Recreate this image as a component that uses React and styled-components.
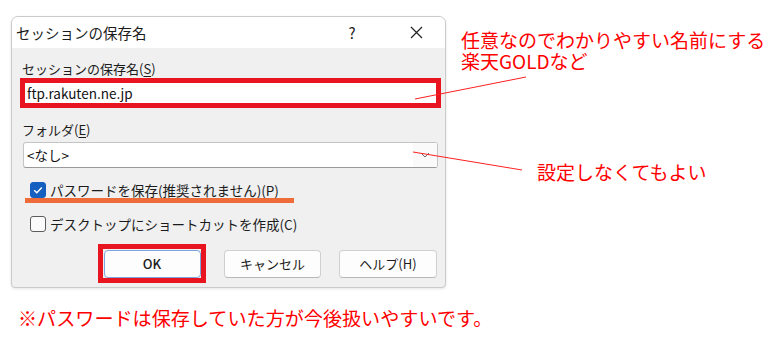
import React from 'react';
import styled, { createGlobalStyle } from 'styled-components';

const GlobalStyle = createGlobalStyle`
  html, body {
    margin: 0;
    padding: 0;
    background: #fff;
  }
  body {
    font-family: "Noto Sans CJK JP", "Noto Sans", sans-serif;
  }
`;

// --- page frame ---
const Page = styled.div`
  position: relative;
  width: 775px;
  height: 337px;
  box-sizing: border-box;
  padding: 16px 0 0 11px;
  overflow: hidden;
  background: #fff;
`;

const TopRow = styled.div`
  display: flex;
  align-items: flex-start;
`;

// --- dialog ---
const Dialog = styled.div`
  width: 435px;
  height: 272px;
  box-sizing: border-box;
  border: 1px solid #cacaca;
  border-radius: 7px 7px 4px 4px;
  background: #f0f0f0;
  overflow: hidden;
  box-shadow: 0 1px 3px rgba(0, 0, 0, 0.1);
  display: flex;
  flex-direction: column;
`;

const TitleBar = styled.div`
  height: 31px;
  flex: none;
  background: #fff;
  display: flex;
  align-items: center;
  padding: 0 6px 0 4px;
`;

const Title = styled.div`
  flex: 1;
  font-size: 14.5px;
  line-height: 20px;
  color: #1b1b1b;
`;

const TitleButton = styled.div`
  width: 46px;
  height: 31px;
  display: flex;
  align-items: center;
  justify-content: center;
  font-size: 15px;
  color: #222;
  & + & {
    margin-left: 18px;
  }
`;

const Body = styled.div`
  flex: 1;
  padding: 12px 7px 5px 11px;
  display: flex;
  flex-direction: column;
`;

const FieldLabel = styled.div`
  font-size: 13px;
  line-height: 18px;
  color: #1b1b1b;
  margin-left: -1px;
  margin-top: ${({ gap }) => gap || 0}px;
`;

const Key = styled.span`
  text-decoration: underline;
  text-underline-offset: 2px;
`;

const RedFrame = styled.div`
  margin: 0 -3px;
  height: 30px;
  box-sizing: border-box;
  border: 5px solid #e8141f;
  background: #fff;
  display: flex;
  align-items: center;
`;

const InputText = styled.div`
  font-size: 13.5px;
  line-height: 20px;
  color: #111;
  padding-left: 2px;
`;

const Select = styled.div`
  margin-top: 3px;
  height: 26px;
  box-sizing: border-box;
  border: 1px solid #c4c4c4;
  border-bottom-color: #9a9a9a;
  border-radius: 3px;
  background: #fff;
  display: flex;
  align-items: center;
`;

const SelectText = styled.div`
  flex: 1;
  font-size: 13.5px;
  line-height: 20px;
  color: #111;
  padding-left: 3px;
`;

const SelectArrow = styled.div`
  width: 24px;
  height: 24px;
  display: flex;
  align-items: center;
  justify-content: center;
  background: #fafafa;
`;

const CheckRow = styled.div`
  position: relative;
  margin-top: ${({ gap }) => gap}px;
  height: 20px;
  display: flex;
  align-items: center;
  padding-left: 7px;

  ${({ marked }) =>
    marked &&
    `
    &::after {
      content: '';
      position: absolute;
      left: 2px;
      top: 18px;
      width: 269px;
      height: 5px;
      background: #ee6c3a;
    }
  `}
`;

const Box = styled.div`
  width: 16px;
  height: 16px;
  box-sizing: border-box;
  border-radius: 3px;
  display: flex;
  align-items: center;
  justify-content: center;
  background: ${({ checked }) => (checked ? '#155fc0' : '#fbfbfb')};
  border: 1px solid ${({ checked }) => (checked ? '#155fc0' : '#5c5c5c')};
`;

const CheckText = styled.div`
  margin-left: 4px;
  font-size: 13.5px;
  line-height: 20px;
  color: #1b1b1b;
`;

const ButtonRow = styled.div`
  margin-top: 10px;
  display: flex;
  justify-content: flex-end;
  align-items: center;
  gap: 18px;
  padding-right: 1px;
`;

const OkFrame = styled.div`
  width: 108px;
  height: 39px;
  box-sizing: border-box;
  border: 5px solid #e8141f;
  display: flex;
  align-items: center;
  justify-content: center;
`;

const Button = styled.div`
  width: ${({ w }) => w || 97}px;
  height: 28px;
  box-sizing: border-box;
  border: 1px solid ${({ primary }) => (primary ? '#7ea6dc' : '#d0d0d0')};
  border-bottom-color: ${({ primary }) => (primary ? '#7ea6dc' : '#b8b8b8')};
  border-radius: 4px;
  background: #fdfdfd;
  display: flex;
  align-items: center;
  justify-content: center;
  font-size: 13px;
  font-weight: ${({ primary }) => (primary ? 500 : 400)};
  color: #1b1b1b;
`;

// --- annotations ---
const Notes = styled.div`
  margin-left: 15px;
  margin-top: 13px;
  display: flex;
  flex-direction: column;
  align-items: flex-start;
`;

const Note = styled.div`
  font-size: 19px;
  line-height: 21px;
  color: #ff0000;
  white-space: nowrap;
  margin-top: ${({ top }) => top || 0}px;
  margin-left: ${({ left }) => left || 0}px;
`;

const Footnote = styled.div`
  margin-top: 20px;
  margin-left: 7px;
  font-size: 19.1px;
  line-height: 20px;
  color: #ff0000;
  white-space: nowrap;
`;

const Leaders = styled.svg`
  position: absolute;
  left: 0;
  top: 0;
  pointer-events: none;
`;

function CloseIcon() {
  return (
    <svg width="13" height="13" viewBox="0 0 13 13">
      <path d="M1 1 L12 12 M12 1 L1 12" stroke="#222" strokeWidth="1.2" fill="none" />
    </svg>
  );
}

function CheckMark() {
  return (
    <svg width="12" height="12" viewBox="0 0 12 12">
      <path d="M2.2 6.3 L4.8 8.8 L9.8 3.4" stroke="#fff" strokeWidth="1.4" fill="none" />
    </svg>
  );
}

function Chevron() {
  return (
    <svg width="10" height="6" viewBox="0 0 10 6">
      <path d="M1 1 L5 5 L9 1" stroke="#6a6a6a" strokeWidth="1" fill="none" />
    </svg>
  );
}

export default function App() {
  return (
    <Page>
      <GlobalStyle />
      <TopRow>
        <Dialog>
          <TitleBar>
            <Title>セッションの保存名</Title>
            <TitleButton>?</TitleButton>
            <TitleButton>
              <CloseIcon />
            </TitleButton>
          </TitleBar>
          <Body>
            <FieldLabel>
              セッションの保存名(<Key>S</Key>)
            </FieldLabel>
            <RedFrame>
              <InputText>ftp.rakuten.ne.jp</InputText>
            </RedFrame>
            <FieldLabel gap={13}>
              フォルダ(<Key>E</Key>)
            </FieldLabel>
            <Select>
              <SelectText>&lt;なし&gt;</SelectText>
              <SelectArrow>
                <Chevron />
              </SelectArrow>
            </Select>
            <CheckRow gap={12} marked>
              <Box checked>
                <CheckMark />
              </Box>
              <CheckText>パスワードを保存(推奨されません)(P)</CheckText>
            </CheckRow>
            <CheckRow gap={14}>
              <Box />
              <CheckText>デスクトップにショートカットを作成(C)</CheckText>
            </CheckRow>
            <ButtonRow>
              <OkFrame>
                <Button primary>OK</Button>
              </OkFrame>
              <Button>キャンセル</Button>
              <Button w={98}>ヘルプ(H)</Button>
            </ButtonRow>
          </Body>
        </Dialog>
        <Notes>
          <Note>
            任意なのでわかりやすい名前にする
            <br />
            楽天GOLDなど
          </Note>
          <Note top={90} left={76}>
            設定しなくてもよい
          </Note>
        </Notes>
      </TopRow>
      <Footnote>※パスワードは保存していた方が今後扱いやすいです。</Footnote>
      <Leaders width="775" height="337" viewBox="0 0 775 337">
        <line x1="415" y1="99" x2="526" y2="77" stroke="#ff2020" strokeWidth="1" />
        <line x1="413" y1="152" x2="522" y2="170" stroke="#ff2020" strokeWidth="1" />
      </Leaders>
    </Page>
  );
}
